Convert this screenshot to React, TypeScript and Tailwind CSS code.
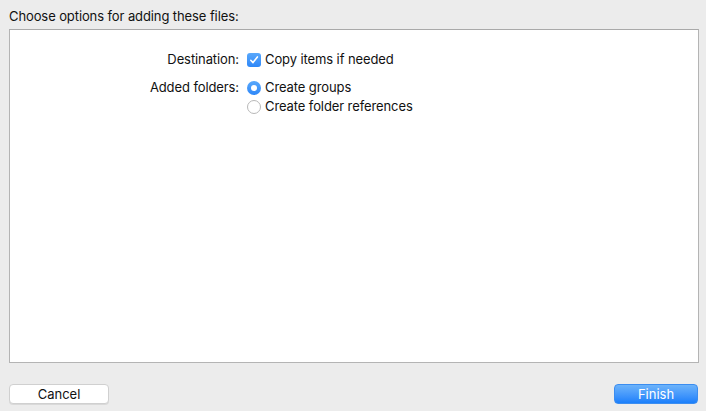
export default function App() {
  return (
    <div
      className="w-[706px] h-[411px] bg-[#ececec] flex flex-col text-[13px] text-[#111111]"
      style={{ fontFamily: '"Inter", "Liberation Sans", sans-serif' }}
    >
      <div className="h-[29px] pl-[9px] pt-[8px] leading-[16px] tracking-[-0.1px]">
        Choose options for adding these files:
      </div>
      <div className="ml-[9px] w-[690px] h-[334px] bg-white border border-[#b4b4b4] border-t-[#a9a9a9]">
        <div className="grid grid-cols-[229px_1fr] gap-x-[8px] pt-[20px] leading-[19px] tracking-[-0.1px]">
          <div className="text-right">Destination:</div>
          <label className="flex items-center gap-[4px] h-[19px]">
            <span className="w-[14px] h-[14px] rounded-[3px] bg-gradient-to-b from-[#59a8fb] to-[#2d87f8] flex items-center justify-center">
              <svg width="10" height="10" viewBox="0 0 10 10">
                <path d="M1.8 5.3 L4 7.6 L8.4 1.9" fill="none" stroke="white" strokeWidth="1.6" strokeLinecap="round" strokeLinejoin="round" />
              </svg>
            </span>
            <span>Copy items if needed</span>
          </label>
          <div className="text-right mt-[9px]">Added folders:</div>
          <div className="flex flex-col mt-[9px]">
            <label className="flex items-center gap-[4px] h-[19px]">
              <span className="w-[14px] h-[14px] rounded-full bg-gradient-to-b from-[#59a8fb] to-[#2d87f8] flex items-center justify-center">
                <span className="w-[6px] h-[6px] rounded-full bg-white" />
              </span>
              <span>Create groups</span>
            </label>
            <label className="flex items-center gap-[4px] h-[19px]">
              <span className="w-[14px] h-[14px] rounded-full bg-white border border-[#b8b8b8]" />
              <span>Create folder references</span>
            </label>
          </div>
        </div>
      </div>
      <div className="flex justify-between px-[8px] mt-[21px]">
        <button className="w-[100px] h-[20px] ml-[1px] rounded-[4px] bg-white border border-[#d0d0d0] shadow-[0_1px_0_rgba(0,0,0,0.08)] leading-[18px] text-[#111111]">
          Cancel
        </button>
        <button className="w-[84px] h-[20px] rounded-[4px] bg-gradient-to-b from-[#6cb3fa] to-[#1a7ffb] border border-[#3b8df0] leading-[18px] text-white">
          Finish
        </button>
      </div>
    </div>
  );
}
